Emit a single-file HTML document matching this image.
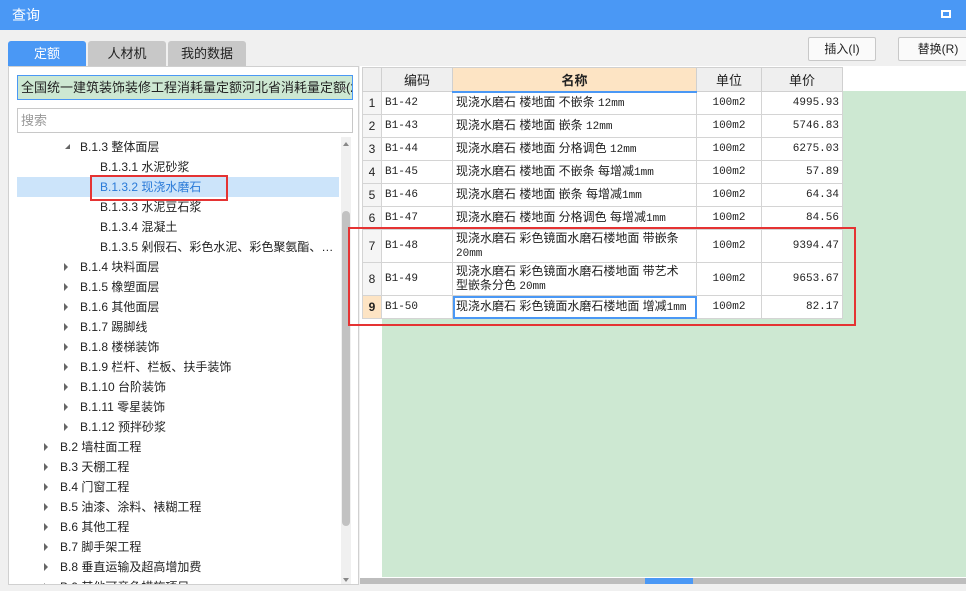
<!DOCTYPE html>
<html><head><meta charset="utf-8"><style>
*{margin:0;padding:0;box-sizing:border-box}
body{width:966px;height:591px;background:#f0f0f0;font-family:"Liberation Sans","Noto Sans CJK SC",sans-serif;font-size:12px;color:#222;position:relative;overflow:hidden}
.abs{position:absolute}
.title{left:0;top:0;width:966px;height:30px;background:#4a98f5;color:#fff;font-size:14px;line-height:30px;padding-left:12px}
.tab{top:41px;height:25px;line-height:25px;text-align:center;font-size:13px;border-radius:3px 3px 0 0}
.tree div.r{position:absolute;height:20px;line-height:20px;font-size:12px;white-space:nowrap}
.tri{position:absolute;width:0;height:0;border-top:4px solid transparent;border-bottom:4px solid transparent;border-left:4px solid #666}
table{border-collapse:collapse;position:absolute;left:362px;top:67px;font-size:12px;table-layout:fixed;width:480px}
td{border:1px solid #d4d4d4;padding:0 3px;background:#fff;white-space:nowrap;vertical-align:middle;line-height:14px}
th{border:1px solid #d0d0d0;background:#efefef;font-weight:normal;font-size:13px;height:24px}
.m{font-family:"Liberation Mono","Noto Sans CJK SC",monospace;font-size:11px}
.btn{top:37px;height:24px;line-height:22px;border:1px solid #c8c8c8;background:#fafafa;border-radius:2px;text-align:center;font-size:12px}
</style></head><body>
<div class="abs title">查询</div>
<div class="abs" style="left:941px;top:10px;width:10px;height:8px;border:2px solid #fff"></div>

<div class="abs tab" style="left:8px;width:78px;background:#4a98f5;color:#fff">定额</div>
<div class="abs tab" style="left:88px;width:78px;background:#c8c8c8">人材机</div>
<div class="abs tab" style="left:168px;width:78px;background:#c8c8c8">我的数据</div>

<div class="abs btn" style="left:808px;width:68px">插入(I)</div>
<div class="abs btn" style="left:898px;width:80px">替换(R)</div>

<div class="abs" style="left:8px;top:66px;width:351px;height:519px;background:#fff;border:1px solid #d0d0d0"></div>
<div class="abs" style="left:17px;top:75px;width:336px;height:25px;background:#cde8d2;border:1px solid #4a98f5;line-height:23px;padding-left:3px;font-size:13px;overflow:hidden;white-space:nowrap">全国统一建筑装饰装修工程消耗量定额河北省消耗量定额(20</div>
<div class="abs" style="left:341px;top:87px;border-left:3px solid transparent;border-right:3px solid transparent;border-top:3px solid #888"></div>
<div class="abs" style="left:17px;top:108px;width:336px;height:25px;background:#fff;border:1px solid #c8c8c8;line-height:23px;padding-left:3px;color:#999;font-size:13px">搜索</div>

<div class="abs" style="left:17px;top:177px;width:322px;height:20px;background:#cce4fa"></div>
<div class="abs" style="left:90px;top:175px;width:138px;height:26px;border:2px solid #e53333"></div>
<div class="abs" style="left:341px;top:137px;width:10px;height:447px;background:#f0f0f0"></div>
<div class="abs" style="left:342px;top:211px;width:8px;height:315px;background:#c2c2c2;border-radius:4px"></div>
<div class="abs" style="left:343px;top:142px;border-left:3px solid transparent;border-right:3px solid transparent;border-bottom:4px solid #888"></div>
<div class="abs" style="left:343px;top:578px;border-left:3px solid transparent;border-right:3px solid transparent;border-top:4px solid #888"></div>

<div class="tree abs" style="left:0;top:0;width:340px;height:584px;overflow:hidden">
<div class="abs" style="left:65px;top:144px;width:0;height:0;border-left:5px solid transparent;border-bottom:5px solid #666"></div>
<div class="r" style="left:80px;top:137px">B.1.3 整体面层</div>
<div class="r" style="left:100px;top:157px">B.1.3.1 水泥砂浆</div>
<div class="r" style="left:100px;top:177px;color:#2a7ad8">B.1.3.2 现浇水磨石</div>
<div class="r" style="left:100px;top:197px">B.1.3.3 水泥豆石浆</div>
<div class="r" style="left:100px;top:217px">B.1.3.4 混凝土</div>
<div class="r" style="left:100px;top:237px">B.1.3.5 剁假石、彩色水泥、彩色聚氨酯、…</div>
<div class="tri" style="left:64px;top:263px"></div><div class="r" style="left:80px;top:257px">B.1.4 块料面层</div>
<div class="tri" style="left:64px;top:283px"></div><div class="r" style="left:80px;top:277px">B.1.5 橡塑面层</div>
<div class="tri" style="left:64px;top:303px"></div><div class="r" style="left:80px;top:297px">B.1.6 其他面层</div>
<div class="tri" style="left:64px;top:323px"></div><div class="r" style="left:80px;top:317px">B.1.7 踢脚线</div>
<div class="tri" style="left:64px;top:343px"></div><div class="r" style="left:80px;top:337px">B.1.8 楼梯装饰</div>
<div class="tri" style="left:64px;top:363px"></div><div class="r" style="left:80px;top:357px">B.1.9 栏杆、栏板、扶手装饰</div>
<div class="tri" style="left:64px;top:383px"></div><div class="r" style="left:80px;top:377px">B.1.10 台阶装饰</div>
<div class="tri" style="left:64px;top:403px"></div><div class="r" style="left:80px;top:397px">B.1.11 零星装饰</div>
<div class="tri" style="left:64px;top:423px"></div><div class="r" style="left:80px;top:417px">B.1.12 预拌砂浆</div>
<div class="tri" style="left:44px;top:443px"></div><div class="r" style="left:60px;top:437px">B.2 墙柱面工程</div>
<div class="tri" style="left:44px;top:463px"></div><div class="r" style="left:60px;top:457px">B.3 天棚工程</div>
<div class="tri" style="left:44px;top:483px"></div><div class="r" style="left:60px;top:477px">B.4 门窗工程</div>
<div class="tri" style="left:44px;top:503px"></div><div class="r" style="left:60px;top:497px">B.5 油漆、涂料、裱糊工程</div>
<div class="tri" style="left:44px;top:523px"></div><div class="r" style="left:60px;top:517px">B.6 其他工程</div>
<div class="tri" style="left:44px;top:543px"></div><div class="r" style="left:60px;top:537px">B.7 脚手架工程</div>
<div class="tri" style="left:44px;top:563px"></div><div class="r" style="left:60px;top:557px">B.8 垂直运输及超高增加费</div>
<div class="tri" style="left:44px;top:583px"></div><div class="r" style="left:60px;top:577px">B.9 其他可竞争措施项目</div>
</div>

<div class="abs" style="left:360px;top:66px;width:606px;height:512px;background:#fff"></div>
<div class="abs" style="left:382px;top:91px;width:584px;height:486px;background:#cde8d2"></div>
<div class="abs" style="left:360px;top:578px;width:606px;height:6px;background:#bdbdbd"></div>
<div class="abs" style="left:645px;top:578px;width:48px;height:6px;background:#4a98f5"></div>

<table>
<colgroup><col style="width:19px"><col style="width:71px"><col style="width:244px"><col style="width:65px"><col style="width:81px"></colgroup>
<tr><th></th><th>编码</th><th style="background:#fde4c4;border-bottom:2px solid #4a98f5;font-weight:bold">名称</th><th>单位</th><th>单价</th></tr>
<tr style="height:23px"><td style="background:#f5f5f5;text-align:center;padding:0">1</td><td class="m">B1-42</td><td>现浇水磨石 楼地面 不嵌条 <span class="m">12mm</span></td><td style="text-align:center" class="m">100m2</td><td class="m" style="text-align:right">4995.93</td></tr>
<tr style="height:23px"><td style="background:#f5f5f5;text-align:center;padding:0">2</td><td class="m">B1-43</td><td>现浇水磨石 楼地面 嵌条 <span class="m">12mm</span></td><td style="text-align:center" class="m">100m2</td><td class="m" style="text-align:right">5746.83</td></tr>
<tr style="height:23px"><td style="background:#f5f5f5;text-align:center;padding:0">3</td><td class="m">B1-44</td><td>现浇水磨石 楼地面 分格调色 <span class="m">12mm</span></td><td style="text-align:center" class="m">100m2</td><td class="m" style="text-align:right">6275.03</td></tr>
<tr style="height:23px"><td style="background:#f5f5f5;text-align:center;padding:0">4</td><td class="m">B1-45</td><td>现浇水磨石 楼地面 不嵌条 每增减<span class="m">1mm</span></td><td style="text-align:center" class="m">100m2</td><td class="m" style="text-align:right">57.89</td></tr>
<tr style="height:23px"><td style="background:#f5f5f5;text-align:center;padding:0">5</td><td class="m">B1-46</td><td>现浇水磨石 楼地面 嵌条 每增减<span class="m">1mm</span></td><td style="text-align:center" class="m">100m2</td><td class="m" style="text-align:right">64.34</td></tr>
<tr style="height:23px"><td style="background:#f5f5f5;text-align:center;padding:0">6</td><td class="m">B1-47</td><td>现浇水磨石 楼地面 分格调色 每增减<span class="m">1mm</span></td><td style="text-align:center" class="m">100m2</td><td class="m" style="text-align:right">84.56</td></tr>
<tr style="height:33px"><td style="background:#f5f5f5;text-align:center;padding:0">7</td><td class="m">B1-48</td><td style="white-space:normal">现浇水磨石 彩色镜面水磨石楼地面 带嵌条<br><span class="m">20mm</span></td><td style="text-align:center" class="m">100m2</td><td class="m" style="text-align:right">9394.47</td></tr>
<tr style="height:33px"><td style="background:#f5f5f5;text-align:center;padding:0">8</td><td class="m">B1-49</td><td style="white-space:normal">现浇水磨石 彩色镜面水磨石楼地面 带艺术<br>型嵌条分色 <span class="m">20mm</span></td><td style="text-align:center" class="m">100m2</td><td class="m" style="text-align:right">9653.67</td></tr>
<tr style="height:23px"><td style="background:#fde4c4;text-align:center;font-weight:bold;padding:0">9</td><td class="m">B1-50</td><td style="outline:2px solid #4a98f5;outline-offset:-2px">现浇水磨石 彩色镜面水磨石楼地面 增减<span class="m">1mm</span></td><td style="text-align:center" class="m">100m2</td><td class="m" style="text-align:right">82.17</td></tr>
</table>
<div class="abs" style="left:348px;top:227px;width:508px;height:99px;border:2px solid #e53333"></div>
</body></html>
